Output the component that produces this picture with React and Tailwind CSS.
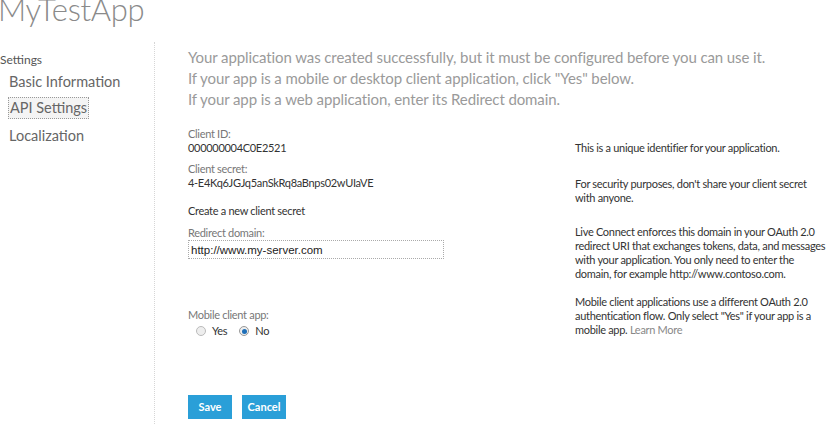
export default function App() {
  return (
    <div className="w-[829px] h-[425px] overflow-hidden bg-white text-[#333] font-['Lato',sans-serif]">
      <h1 className="text-[31px] leading-[32px] font-light text-[#8a8a8a] -mt-[7px] -ml-[2px] tracking-[-0.3px]">MyTestApp</h1>

      <div className="flex mt-[17px]">
        <aside className="w-[155px] shrink-0 h-[400px] border-r border-dotted border-[#d6d6d6]">
          <div className="text-[12px] leading-[16px] text-[#555] mt-[10px]">Settings</div>
          <nav className="mt-[4px] flex flex-col text-[14.5px] leading-[20px] text-[#666]">
            <a className="ml-[9px] mb-[5px]">Basic Information</a>
            <a className="ml-[8px] mr-auto px-[1px] border border-dotted border-[#999] bg-[#f4f4f4]">API Settings</a>
            <a className="ml-[9px] mt-[7px]">Localization</a>
          </nav>
        </aside>

        <main className="pl-[33px] pt-[5px] flex-1">
          <div className="text-[15px] leading-[21px] text-[#9a9a9a] tracking-[-0.1px]">
            <p>Your application was created successfully, but it must be configured before you can use it.</p>
            <p>If your app is a mobile or desktop client application, click "Yes" below.</p>
            <p>If your app is a web application, enter its Redirect domain.</p>
          </div>

          <div className="flex mt-[17px] text-[11px] leading-[14px] tracking-[-0.3px]">
            <div className="w-[387px] shrink-0">
              <div className="text-[#777]">Client ID:</div>
              <div>000000004C0E2521</div>

              <div className="text-[#777] mt-[7px]">Client secret:</div>
              <div>4-E4Kq6JGJq5anSkRq8aBnps02wUIaVE</div>

              <div className="mt-[14px]">Create a new client secret</div>

              <div className="text-[#777] mt-[8px]">Redirect domain:</div>
              <input
                readOnly
                value="http://www.my-server.com"
                className="block w-[256px] h-[19px] px-[2px] border border-dotted border-[#aaa] text-[11.5px] tracking-normal text-[#222] font-['Liberation_Sans',sans-serif] outline-none"
              />

              <div className="text-[#777] mt-[49px]">Mobile client app:</div>
              <div className="flex items-center gap-[6px] mt-[2px] ml-[8px]">
                <span className="w-[10px] h-[10px] rounded-full border border-[#bbb] bg-[#eee]" />
                <span className="mr-[6px]">Yes</span>
                <span className="w-[10px] h-[10px] rounded-full border border-[#999] bg-[#eee] flex items-center justify-center">
                  <span className="w-[5px] h-[5px] rounded-full bg-[#1e6fb8]" />
                </span>
                <span>No</span>
              </div>

              <div className="flex gap-[10px] mt-[57px] tracking-normal">
                <button className="w-[44px] h-[24px] bg-[#2a9fd8] text-white text-[11px] font-bold">Save</button>
                <button className="w-[44px] h-[24px] bg-[#2a9fd8] text-white text-[11px] font-bold">Cancel</button>
              </div>
            </div>

            <div className="w-[254px] shrink-0 pt-[14px]">
              <p>This is a unique identifier for your application.</p>
              <p className="mt-[22px]">For security purposes, don't share your client secret with anyone.</p>
              <p className="mt-[20px]">
                Live Connect enforces this domain in your OAuth 2.0 redirect URI that exchanges tokens, data, and messages
                with your application. You only need to enter the domain, for example http://www.contoso.com.
              </p>
              <p className="mt-[14px]">
                Mobile client applications use a different OAuth 2.0 authentication flow. Only select "Yes" if your app is a
                mobile app. <span className="text-[#888]">Learn More</span>
              </p>
            </div>
          </div>
        </main>
      </div>
    </div>
  );
}
